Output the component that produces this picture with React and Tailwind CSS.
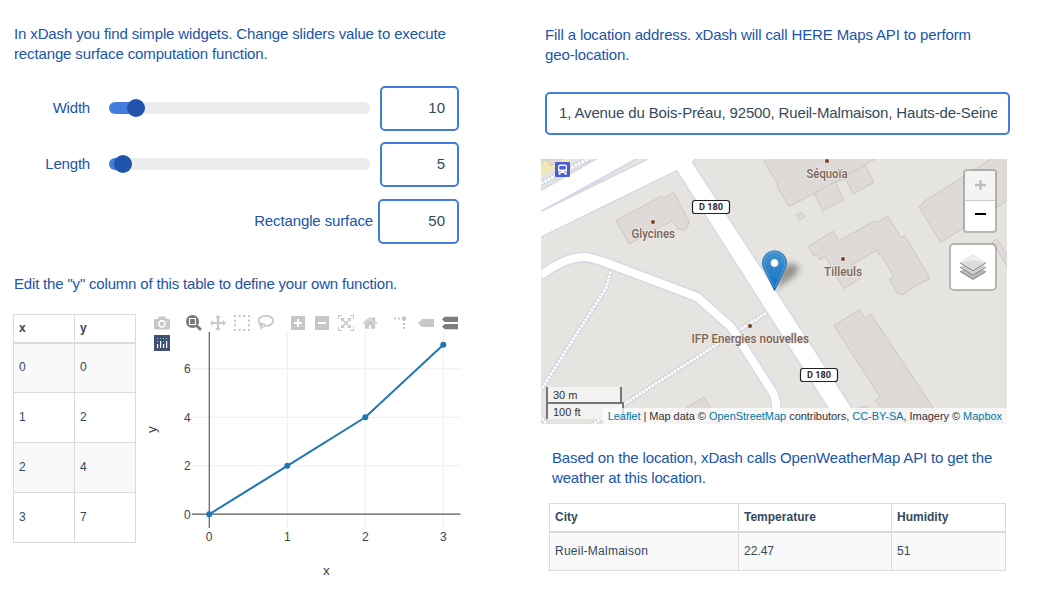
import React from "react";

const sans = "font-['Liberation_Sans',Arial,sans-serif]";

function SliderRow({ label, value, fill }) {
  return (
    <div className="flex h-[45px]">
      <span className="flex w-[77px] items-center justify-end pb-px tracking-[-0.2px]">{label}</span>
      <div className="ml-[19px] mt-4 flex h-3 w-[261px] items-center rounded-full bg-[#ebecee]">
        <div className="h-3 rounded-l-full bg-[#447bdf]" style={{ width: fill }} />
        <div className="-ml-[9px] size-[18px] rounded-full bg-[#2054aa]" />
      </div>
      <div className="ml-[10px] flex h-full w-[79px] items-center justify-end rounded-[5px] border-2 border-[#447bdf] pb-px pr-3 text-[#34495e]">
        {value}
      </div>
    </div>
  );
}

function FunctionTable() {
  const rows = [[0, 0], [1, 2], [2, 4], [3, 7]];
  return (
    <div className="flex h-[229px] w-[123px] flex-col border border-[#dbdbdb] text-[12px] text-[#34495e]">
      <div className="flex h-[29px] border-b-2 border-[#dbdbdb] font-bold">
        <div className="flex w-[61px] items-center border-r border-[#dbdbdb] pb-px pl-[5px]">x</div>
        <div className="flex items-center pb-px pl-[5px]">y</div>
      </div>
      {rows.map(([x, y], i) => (
        <div
          key={x}
          className={
            (i === 0 || i === 3 ? "h-[49px] " : "h-[50px] ") +
            (i === 3 ? "flex" : "flex border-b border-[#dbdbdb]") +
            (i % 2 === 0 ? " bg-[#f9f9f9]" : "")
          }
        >
          <div className="flex w-[61px] items-center border-r border-[#dbdbdb] pb-[2px] pl-[5px]">{x}</div>
          <div className="flex items-center pb-[2px] pl-[5px]">{y}</div>
        </div>
      ))}
    </div>
  );
}

function ModeIcon({ x, w = 1000, d, dark }) {
  return (
    <svg x={x} y="315" width="16" height="16" viewBox={`0 0 ${w} 1000`}>
      <path d={d} transform="matrix(1 0 0 -1 0 850)" fill={dark ? "#7c7c7c" : "#c7c7c7"} />
    </svg>
  );
}

const icons = {
  camera:
    "m500 450c-83 0-150-67-150-150 0-83 67-150 150-150 83 0 150 67 150 150 0 83-67 150-150 150z m400 150h-120c-16 0-34 13-39 29l-31 93c-6 15-23 28-40 28h-340c-16 0-34-13-39-28l-31-94c-6-15-23-28-40-28h-120c-55 0-100-45-100-100v-450c0-55 45-100 100-100h800c55 0 100 45 100 100v450c0 55-45 100-100 100z m-400-550c-138 0-250 112-250 250 0 138 112 250 250 250 138 0 250-112 250-250 0-138-112-250-250-250z m365 380c-19 0-35 16-35 35 0 19 16 35 35 35 19 0 35-16 35-35 0-19-16-35-35-35z",
  zoom: "m1000-25l-250 251c40 63 63 138 63 218 0 224-182 406-407 406-224 0-406-182-406-406s183-406 407-406c80 0 155 22 218 62l250-250 125 125z m-812 250l0 438 437 0 0-438-437 0z m62 375l313 0 0-312-313 0 0 312z",
  pan: "m1000 350l-187 188 0-125-250 0 0 250 125 0-188 187-187-187 125 0 0-250-250 0 0 125-188-188 186-187 0 125 252 0 0-250-125 0 187-188 188 188-125 0 0 250 250 0 0-126 187 188z",
  plus: "m1 787l0-875 875 0 0 875-875 0z m687-500l-187 0 0-187-125 0 0 187-188 0 0 125 188 0 0 187 125 0 0-187 187 0 0-125z",
  minus: "m0 788l0-876 875 0 0 876-875 0z m688-500l-500 0 0 125 500 0 0-125z",
  auto: "m250 850l-187 0-63 0 0-62 0-188 63 0 0 188 187 0 0 62z m688 0l-188 0 0-62 188 0 0-188 62 0 0 188 0 62-62 0z m-875-938l0 188-63 0 0-188 0-62 63 0 187 0 0 62-187 0z m875 188l0-188-188 0 0-62 188 0 62 0 0 62 0 188-62 0z m-125 188l-1 0-93-94-156 156 156 156 92-93 2 0 0 250-250 0 0-2 93-92-156-156-156 156 94 92 0 2-250 0 0-250 0 0 93 93 157-156-157-156-93 94 0 0 0-250 250 0 0 0-94 93 156 157 156-157-93-93 0 0 250 0 0 250z",
  home: "m786 296v-267q0-15-11-26t-25-10h-214v214h-143v-214h-214q-15 0-25 10t-11 26v267q0 1 0 2t0 2l321 264 321-264q1-1 1-4z m124 39l-34-41q-5-5-12-6h-2q-7 0-12 3l-386 322-386-322q-7-4-13-4-7 2-12 7l-35 41q-4 5-3 13t6 12l401 334q18 15 42 15t43-15l136-114v109q0 8 5 13t13 5h107q8 0 13-5t5-13v-227l122-102q5-5 6-12t-4-13z",
  closest: "m375 725l0 0-375-375 375-374 0-1 1125 0 0 750-1125 0z",
  compare:
    "m187 786l0 2-187-188 188-187 0 0 937 0 0 373-938 0z m0-499l0 1-187-188 188-188 0 0 937 0 0 376-938-1z",
};

function Plot() {
  const px = [209.2, 287.3, 365.3, 443.3];
  const ty = [[0, 514.2], [2, 465.8], [4, 417.3], [6, 368.8]];
  return (
    <svg width="324" height="276" viewBox="141 314 324 276" className="block">
      <g stroke="#eeeeee" strokeWidth="1">
        {px.slice(1).map((x) => (
          <line key={x} x1={x} x2={x} y1="332" y2="528" />
        ))}
        {ty.slice(1).map(([v, y]) => (
          <line key={v} x1="192" x2="460.5" y1={y} y2={y} />
        ))}
      </g>
      <path d="M209.3 332V528M192 514.2H460.5" stroke="#5a5a5a" strokeWidth="1.2" />
      <polyline points="209.2,514.3 287.3,465.8 365.3,417.3 443.3,344.7" fill="none" stroke="#1f77b4" strokeWidth="2" />
      <g fill="#1f77b4">
        <circle cx="209.2" cy="514.3" r="3" />
        <circle cx="287.3" cy="465.8" r="3" />
        <circle cx="365.3" cy="417.3" r="3" />
        <circle cx="443.3" cy="344.7" r="3" />
      </g>
      <g fill="#444" fontSize="12" className={sans}>
        {px.map((x, i) => (
          <text key={x} x={x} y="541" textAnchor="middle">{i}</text>
        ))}
        {ty.map(([v, y]) => (
          <text key={v} x="190.8" y={y + 4.3} textAnchor="end">{v}</text>
        ))}
        <text x="326.3" y="575" textAnchor="middle" fontSize="13.5">x</text>
        <text x="0" y="0" transform="translate(155.5 429.5) rotate(-90)" textAnchor="middle" fontSize="13.5">y</text>
      </g>

      <ModeIcon x={154} d={icons.camera} />
      <ModeIcon x={186} d={icons.zoom} dark />
      <ModeIcon x={210} d={icons.pan} />
      <g fill="#c7c7c7">
        {[0, 4.6, 9.2, 14].map((k) => (
          <g key={k}>
            <rect x={234 + k} y="315" width="2" height="2" />
            <rect x={234 + k} y="329" width="2" height="2" />
            <rect x="234" y={315 + k} width="2" height="2" />
            <rect x="248" y={315 + k} width="2" height="2" />
          </g>
        ))}
      </g>
      <g fill="none" stroke="#c7c7c7" strokeWidth="1.7">
        <path d="M262.4 325.4C257.6 323.5 257.4 318.6 261.6 316.8C265.6 315 271.6 316 272.9 319.6C274 323.5 269.8 326.6 264 325.9" />
        <path d="M263.6 323.6C260.8 322.6 259.3 325 260.5 326.6C262.2 328 265 326.8 264.6 324.8C264.2 323.6 262.6 323.6 262.2 324.7M260.8 326.4C261.8 327.6 261.2 328.6 260.4 329.6" strokeWidth="1.3" />
      </g>
      <ModeIcon x={290} w={875} d={icons.plus} />
      <ModeIcon x={314} w={875} d={icons.minus} />
      <ModeIcon x={338} d={icons.auto} />
      <ModeIcon x={362} w={928.6} d={icons.home} />
      <g fill="#c7c7c7">
        <circle cx="404" cy="318.6" r="2.4" />
        <rect x="394" y="317.5" width="2" height="2" />
        <rect x="398" y="317.5" width="2" height="2" />
        <rect x="403" y="323" width="2" height="2" />
        <rect x="403" y="327" width="2" height="2" />
      </g>
      <ModeIcon x={418} w={1500} d={icons.closest} />
      <ModeIcon x={442} w={1125} d={icons.compare} dark />

      <rect x="154" y="335" width="16" height="16" fill="#3f4f75" />
      <g fill="#80cfbe">
        {[157, 160, 163, 166].map((x) => (
          <rect key={x} x={x} y="338" width="1" height="1" />
        ))}
        <rect x="157" y="341" width="1" height="1" />
        <rect x="163" y="341" width="1" height="1" />
      </g>
      <g fill="#fff">
        <rect x="157" y="344" width="1.2" height="4" />
        <rect x="160" y="341" width="1.2" height="7" />
        <rect x="163" y="344" width="1.2" height="4" />
        <rect x="166" y="341" width="1.2" height="7" />
      </g>
    </svg>
  );
}

const dottedPaths = [
  "M541 183.5L590 158",
  "M611.7 268L606 288L541 390",
  "M769 311L590 426",
  "M538 412L548 427",
];

function MapLabel({ x, y, w, dot, children }) {
  return (
    <g>
      <circle cx={dot[0]} cy={dot[1]} r="2.6" fill="#784b33" stroke="#f2eeeb" strokeWidth="1" />
      <text
        x={x}
        y={y}
        textLength={w}
        lengthAdjust="spacingAndGlyphs"
        fill="#7c6453"
        stroke="#edeae7"
        strokeWidth="1.6"
        paintOrder="stroke"
        fontSize="12.5"
        className="font-[Roboto,sans-serif] font-medium"
      >
        {children}
      </text>
    </g>
  );
}

function Shield({ x, y }) {
  return (
    <g>
      <rect x={x + 0.5} y={y + 0.5} width="37" height="13" rx="2.5" fill="#fff" stroke="#222" strokeWidth="1.2" />
      <text x={x + 7} y={y + 10.3} textLength="24" lengthAdjust="spacingAndGlyphs" fontSize="9.5" fill="#2a2a2a" className="font-[Roboto,sans-serif] font-bold">
        D 180
      </text>
    </g>
  );
}

function MapDrawing() {
  return (
    <svg width="466" height="265" viewBox="541 159 466 265" className="block">
      <defs>
        <linearGradient id="pin" x1="0" y1="0" x2="0" y2="1">
          <stop offset="0" stopColor="#4394cf" />
          <stop offset="1" stopColor="#126fc6" />
        </linearGradient>
        <linearGradient id="pinEdge" x1="0" y1="0" x2="0" y2="1">
          <stop offset="0" stopColor="#3883b7" />
          <stop offset="1" stopColor="#2e6c97" />
        </linearGradient>
        <filter id="soft" x="-50%" y="-50%" width="200%" height="200%">
          <feGaussianBlur stdDeviation="3" />
        </filter>
      </defs>
      <rect x="541" y="159" width="466" height="265" fill="#e5e4e0" />
      <path d="M541 159H572L541 176Z" fill="#f3e7b4" />
      <path d="M541 159H547L541 164ZM546 159H562L551 166Z" fill="#dedad7" stroke="#c9c3bd" strokeWidth=".7" />

      <g fill="#dedad7" stroke="#cbc6c3" strokeWidth="1">
        <path d="M616 220.7L661.7 196L663 198.7L673.7 192.3L688.7 221C689 226 686 230 682 229.8C679 229.5 677 228.5 676.7 227.3L672.7 220.3L629.3 244Z" />
        <path d="M764 158L764.3 162.7L770 171.5L776.7 181.7L778 184.5L777 186L789 206.7L814 193.3L822.7 210.7L843.7 200L835.5 182.5L845.3 178.3L853.3 194L874 182.3L865 165L877 158Z" />
        <path d="M814 193.3L865 165" fill="none" />
        <path d="M796.7 215L801 212.3L805 216.7L799 220Z" />
        <path d="M808.3 246.7L832.7 231L839.3 240.7L875 220.7L876 222.7L887.7 216L901 237.7L905 236L930 278.3L910 289.3C906 294 899 297 896 291L889.3 279.3L894 276.7L881.7 256L878 254L878.3 249.3L852.3 264.3L860 278.3L844 288.7L825 256L820 260L817 255L814 256Z" />
        <path d="M919 207.3L925 201L992.7 158H1008V200L940.7 242.3Z" />
        <path d="M992 242L997 239L1008 256V268Z" />
        <path d="M834 325.7L859.3 309.3L865 318.3L871 314.3L933.3 408L944 425H893L875.3 400L880 396.7Z" />
        <path d="M857 409L866 405.7L878 425H866Z" />
        <path d="M660 425L683 410L704 397.3L722 425Z" />
        <path d="M985 415L996 410L1004 425H988Z" />
      </g>

      <g fill="none" strokeLinejoin="round">
        {dottedPaths.map((d) => (
          <path key={d} d={d} stroke="#d5d7e2" strokeWidth="5.4" />
        ))}
        {dottedPaths.map((d) => (
          <path key={d} d={d} stroke="#fff" strokeWidth="2.8" strokeDasharray="2.6 1.2" />
        ))}
        <path d="M541 275C557 264 570 256.5 587 257L603 261.5L680 290.5L697 297L731 327L770 388Q781 402 773 424" stroke="#d5d8e6" strokeWidth="11" />
        <path d="M541 275C557 264 570 256.5 587 257L603 261.5L680 290.5L697 297L731 327L770 388Q781 402 773 424" stroke="#fff" strokeWidth="8" />
      </g>
      <g fill="#fff" stroke="#d5d8e6" strokeWidth="1.5">
        <path d="M540 191L598 158H638L540 212Z" />
        <path d="M540 212L650 158H697L692.3 162L776.7 291.7L863 425H839L752.7 290L676.7 170.7L540 237.5Z" />
      </g>
      <path d="M541 212L605 176L600 182Z" fill="#d5d8e6" />
      <g>
        <rect x="555" y="162" width="15" height="15" rx="1" fill="#4a5fcc" />
        <rect x="558" y="164.5" width="9" height="8.5" rx="2" fill="#fff" />
        <rect x="559.2" y="166" width="6.6" height="3.6" rx="1" fill="#4a5fcc" />
        <rect x="558.6" y="173" width="2" height="1.8" fill="#fff" />
        <rect x="564.6" y="173" width="2" height="1.8" fill="#fff" />
        <circle cx="560" cy="171.4" r=".7" fill="#4a5fcc" />
        <circle cx="565" cy="171.4" r=".7" fill="#4a5fcc" />
      </g>
      <Shield x={692} y={200} />
      <Shield x={800} y={368} />
      <MapLabel x={631.5} y={238.3} w={43.5} dot={[653, 222]}>Glycines</MapLabel>
      <MapLabel x={806.5} y={177.6} w={41} dot={[827, 161]}>Séquoïa</MapLabel>
      <MapLabel x={824} y={275.8} w={38} dot={[843, 259]}>Tilleuls</MapLabel>
      <MapLabel x={691.5} y={342.5} w={117.5} dot={[750, 326]}>IFP Energies nouvelles</MapLabel>

      <path d="M775 290L780 273Q787 260 797 265Q802 270 792 278Z" fill="#000" opacity=".36" filter="url(#soft)" />
      <path
        d="M774.5 290.5L764.5 270C762.8 267 762.4 265 762.4 262.8A12.1 12.1 0 0 1 786.6 262.8C786.6 265 786.2 267 784.5 270Z"
        fill="url(#pin)"
        stroke="url(#pinEdge)"
        strokeWidth="1"
      />
      <path d="M774.5 287.5L765.6 269.5C761 259 768 251.8 774.5 251.8S788 259 783.4 269.5Z" fill="none" stroke="#fff" strokeOpacity=".18" />
      <circle cx="774.5" cy="263" r="4.3" fill="#fff" stroke="#2e7cb5" strokeWidth=".8" />
    </svg>
  );
}

function LayersIcon() {
  return (
    <svg width="26" height="26" viewBox="0 0 26 26">
      <path d="M0 17.4L13 9L26 17.4L13 25.6Z" fill="#b8b8b8" />
      <path d="M0 17.4L13 25.4L26 17.4" fill="none" stroke="#747474" strokeWidth=".9" />
      <path d="M0 13L13 4.8L26 13L13 21.4Z" fill="#cecece" stroke="#fff" strokeWidth=".6" />
      <path d="M0 13.2L13 21.2L26 13.2" fill="none" stroke="#747474" strokeWidth=".9" />
      <path d="M0 8.6L13 .3L26 8.6L13 17Z" fill="#dcdcdc" stroke="#fff" strokeWidth=".6" />
      <path d="M0 8.8L13 16.8L26 8.8" fill="none" stroke="#747474" strokeWidth=".9" />
      <path d="M2 8.6L13 1.5L24 8.6L13 6Z" fill="#f0f0f0" />
    </svg>
  );
}

function LocationMap() {
  return (
    <div className="relative h-[265px] w-[466px] overflow-hidden">
      <MapDrawing />
      <div className="absolute right-[10px] top-[10px] flex flex-col items-end gap-[10px]">
        <div className="h-[64px] w-[34px] overflow-hidden rounded-[4px] border-2 border-black/20 bg-white bg-clip-padding">
          <div className="flex h-[30px] items-center justify-center border-b border-[#ccc] bg-[#f4f4f4]">
            <svg width="12" height="12" viewBox="0 0 12 12"><path d="M6.5 0V10M1 5H12" stroke="#bbb" strokeWidth="2.4" /></svg>
          </div>
          <div className="flex h-[30px] items-center justify-center">
            <svg width="12" height="6" viewBox="0 0 12 6"><path d="M1 1H12" stroke="#000" strokeWidth="2" /></svg>
          </div>
        </div>
        <div className="flex size-[48px] items-center justify-center rounded-[5px] border-2 border-black/20 bg-white bg-clip-padding">
          <LayersIcon />
        </div>
      </div>
      <div className="absolute bottom-[5px] left-[5px] text-[11px] leading-[13px] text-[#333]">
        <div className="h-[17px] w-[76px] border-2 border-t-0 border-[#777] bg-white/50 pl-[5px] pt-[2px]">30 m</div>
        <div className="-mt-[2px] h-[17px] w-[78px] border-2 border-b-0 border-[#777] bg-white/50 pl-[5px] pt-[2px]">100 ft</div>
      </div>
      <div className="absolute bottom-0 right-0 h-[16px] whitespace-nowrap bg-white/70 px-[5px] text-[11px] leading-[16px] tracking-[-0.038px] text-[#333]">
        <span className="text-[#0078a8]">Leaflet</span> | Map data © <span className="text-[#0078a8]">OpenStreetMap</span>{" "}
        contributors, <span className="text-[#0078a8]">CC-BY-SA</span>, Imagery © <span className="text-[#0078a8]">Mapbox</span>
      </div>
    </div>
  );
}

function WeatherTable() {
  const cell = "flex items-center pb-[2px] pl-[5px]";
  return (
    <div className="h-[68px] w-[457px] border border-[#dbdbdb] text-[12px] text-[#34495e]">
      <div className="flex h-[29px] border-b-2 border-[#dbdbdb] font-bold">
        <div className={cell + " w-[189px] border-r border-[#dbdbdb]"}>City</div>
        <div className={cell + " w-[153px] border-r border-[#dbdbdb]"}>Temperature</div>
        <div className={cell}>Humidity</div>
      </div>
      <div className="flex h-[37px] bg-[#f9f9f9]">
        <div className={cell + " w-[189px] border-r border-[#dbdbdb] tracking-[0.25px]"}>Rueil-Malmaison</div>
        <div className={cell + " w-[153px] border-r border-[#dbdbdb]"}>22.47</div>
        <div className={cell}>51</div>
      </div>
    </div>
  );
}

export default function App() {
  return (
    <div className={"flex h-[590px] w-[1060px] overflow-hidden bg-white text-[15px] leading-[20px] text-[#2054aa] " + sans}>
      <section className="flex w-[528px] flex-col pl-[13px] pt-[24px]">
        <p className="ml-px w-[445px] tracking-[-0.13px]">
          In xDash you find simple widgets. Change sliders value to execute rectange surface computation function.
        </p>
        <div className="mt-[22px] flex flex-col gap-[11px]">
          <SliderRow label="Width" value="10" fill={27} />
          <SliderRow label="Length" value="5" fill={14} />
        </div>
        <div className="mt-3 flex h-[45px] w-[446px] items-center justify-end">
          <span className="pb-px tracking-[-0.12px]">Rectangle surface</span>
          <div className="ml-[5px] flex h-full w-[81px] items-center justify-end rounded-[5px] border-2 border-[#447bdf] pb-px pr-3 text-[#34495e]">50</div>
        </div>
        <p className="ml-px mt-[30px] tracking-[-0.18px]">Edit the "y" column of this table to define your own function.</p>
        <div className="mt-[20px] flex gap-[5px]">
          <FunctionTable />
          <Plot />
        </div>
      </section>

      <section className="flex flex-col pl-[13px] pt-[25px]">
        <p className="ml-[4px] w-[445px] tracking-[-0.13px]">
          Fill a location address. xDash will call HERE Maps API to perform geo-location.
        </p>
        <div className="ml-[4px] mt-[27px] flex h-[43px] w-[465px] items-center rounded-[5px] border-2 border-[#447bdf] pb-px pl-3 pr-[11px] text-[#34495e]">
          <span className="w-full overflow-hidden whitespace-nowrap tracking-[-0.14px]">
            1, Avenue du Bois-Préau, 92500, Rueil-Malmaison, Hauts-de-Seine
          </span>
        </div>
        <div className="mt-[24px]">
          <LocationMap />
        </div>
        <p className="ml-[11px] mt-[24px] w-[450px] tracking-[-0.155px]">
          Based on the location, xDash calls OpenWeatherMap API to get the weather at this location.
        </p>
        <div className="ml-[8px] mt-[15px]">
          <WeatherTable />
        </div>
      </section>
    </div>
  );
}
